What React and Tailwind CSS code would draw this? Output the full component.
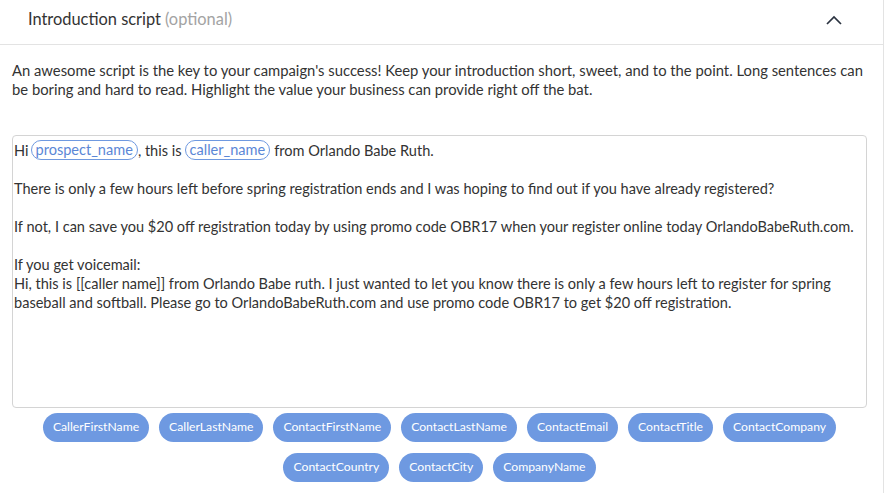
import React from "react";

const chips1 = ["CallerFirstName", "CallerLastName", "ContactFirstName", "ContactLastName", "ContactEmail", "ContactTitle", "ContactCompany"];
const chips2 = ["ContactCountry", "ContactCity", "CompanyName"];

function Tag({ children }) {
  return (
    <span className="inline-flex items-center h-[20px] px-[4px] rounded-full border border-[#6f99e0] text-[#5b87d6] leading-none align-middle">
      {children}
    </span>
  );
}

function Chip({ children }) {
  return (
    <span className="inline-flex items-center h-[29px] px-[10px] rounded-full bg-[#6e99e1] text-white text-[12.2px]">
      {children}
    </span>
  );
}

export default function App() {
  return (
    <div className="w-[885px] h-[493px] bg-white overflow-hidden text-[#333]" style={{ fontFamily: "Lato, 'Noto Sans', sans-serif" }}>
      <div className="w-[884px] h-full border-r border-[#e3e3e3]">
        <div className="h-[45px] border-b border-[#e3e3e3] flex items-center pb-[5px] pl-[28px] pr-[40px]">
          <span className="text-[16.4px] text-[#333]">Introduction script</span>
          <span className="ml-[4px] text-[16.4px] text-[#a3a3a3]">(optional)</span>
          <svg className="ml-auto" width="18" height="12" viewBox="0 0 18 12" fill="none">
            <path d="M2 10 L9 3 L16 10" stroke="#2b3340" strokeWidth="1.7" />
          </svg>
        </div>
        <p className="px-[12px] pt-[16px] text-[14.8px] leading-[19px] text-[#333]">
          An awesome script is the key to your campaign's success! Keep your introduction short, sweet, and to the point. Long sentences can be boring and hard to read. Highlight the value your business can provide right off the bat.
        </p>
        <div className="mx-[12px] mt-[36px] w-[855px] h-[273px] border border-[#d4d4d4] rounded-[4px] px-[1px] pt-[4px] text-[14.55px] leading-[19px] text-[#333]">
          <div className="flex items-center">
            <span>Hi</span>
            <span className="w-[2px]" />
            <Tag>prospect_name</Tag>
            <span>, this is</span>
            <span className="w-[3px]" />
            <Tag>caller_name</Tag>
            <span className="w-[4px]" />
            <span>from Orlando Babe Ruth.</span>
          </div>
          <div className="h-[19px]" />
          <div>There is only a few hours left before spring registration ends and I was hoping to find out if you have already registered?</div>
          <div className="h-[19px]" />
          <div>If not, I can save you $20 off registration today by using promo code OBR17 when your register online today OrlandoBabeRuth.com.</div>
          <div className="h-[19px]" />
          <div>If you get voicemail:</div>
          <div>Hi, this is [[caller name]] from Orlando Babe ruth. I just wanted to let you know there is only a few hours left to register for spring baseball and softball. Please go to OrlandoBabeRuth.com and use promo code OBR17 to get $20 off registration.</div>
        </div>
        <div className="w-[855px] mx-[12px] mt-[5px] flex flex-col items-center gap-[11px]">
          <div className="flex gap-[10px]">
            {chips1.map((c) => <Chip key={c}>{c}</Chip>)}
          </div>
          <div className="flex gap-[10px]">
            {chips2.map((c) => <Chip key={c}>{c}</Chip>)}
          </div>
        </div>
      </div>
    </div>
  );
}
